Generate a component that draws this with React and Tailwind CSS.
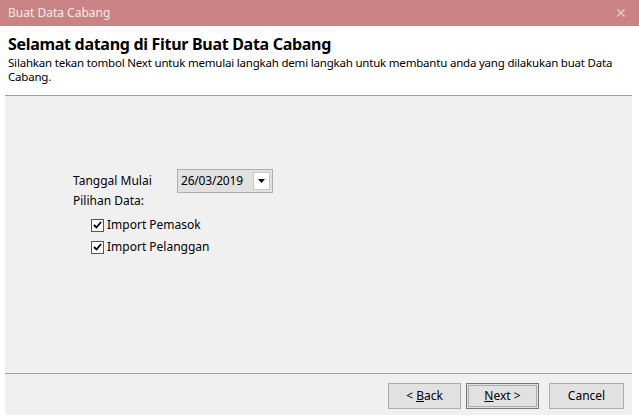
export default function App() {
  const font = { fontFamily: '"Noto Sans", "Open Sans", sans-serif' };
  return (
    <div className="w-[639px] h-[420px] bg-white overflow-hidden flex flex-col text-[12px] text-black" style={font}>
      <div className="h-[26px] bg-[#c98385] flex items-center justify-between pl-[8px] pr-[12px] shrink-0">
        <span className="text-[#f7eaea] text-[12px]">Buat Data Cabang</span>
        <span className="text-[#e9c9ca] text-[14px] leading-none">✕</span>
      </div>
      <div className="h-[69px] shrink-0 pl-[8px] pt-[8px]">
        <div className="text-[16px] font-bold leading-[20px] tracking-[-0.3px]">Selamat datang di Fitur Buat Data Cabang</div>
        <div className="text-[11.5px] leading-[14px] mt-[2px] tracking-[-0.2px]">
          <div className="whitespace-nowrap">Silahkan tekan tombol Next untuk memulai langkah demi langkah untuk membantu anda yang dilakukan buat Data</div>
          <div>Cabang.</div>
        </div>
      </div>
      <div className="ml-[5px] mr-[7px] flex flex-col">
        <div className="h-px bg-[#a0a0a0]" />
        <div className="h-[277px] bg-[#f0f0f0] pl-[68px] pt-[73px] flex flex-col">
          <div className="flex items-center h-[24px]">
            <span className="w-[104px] text-[12px]">Tanggal Mulai</span>
            <div className="w-[96px] h-[24px] border border-[#adadad] bg-[#e1e1e1] flex items-center justify-between pl-[3px] pr-[2px]">
              <span className="text-[12px] tracking-[-0.2px]">26/03/2019</span>
              <div className="w-[17px] h-[18px] bg-white border border-[#c8c8c8] flex items-center justify-center">
                <svg width="7" height="4" viewBox="0 0 7 4"><path d="M0 0H7L3.5 4Z" fill="#000" /></svg>
              </div>
            </div>
          </div>
          <div className="h-[20px] flex items-center mt-[-2px]">Pilihan Data:</div>
          <div className="flex flex-col pl-[18px] mt-[3px]">
            {["Import Pemasok", "Import Pelanggan"].map((t) => (
              <div key={t} className="flex items-center h-[22px]">
                <div className="w-[13px] h-[13px] border border-[#555] bg-white flex items-center justify-center mr-[2px]">
                  <svg width="9" height="8" viewBox="0 0 9 8"><path d="M1 4L3.5 6.5L8 1" stroke="#000" strokeWidth="1.8" fill="none" /></svg>
                </div>
                <span className="ml-[1px]">{t}</span>
              </div>
            ))}
          </div>
        </div>
        <div className="h-px bg-[#a0a0a0]" />
        <div className="h-[41px] bg-[#f0f0f0] flex items-start justify-end pt-[9px] pr-[8px]">
          <button className="w-[73px] h-[26px] bg-[#e1e1e1] border border-[#adadad] text-[12px] flex items-center justify-center">
            &lt;&nbsp;<span className="underline">B</span>ack
          </button>
          <button className="w-[73px] h-[26px] ml-[5px] bg-[#e1e1e1] border border-[#777] outline outline-1 outline-[#adadad] outline-offset-[-3px] text-[12px] flex items-center justify-center">
            <span className="underline">N</span>ext&nbsp;&gt;
          </button>
          <button className="w-[75px] h-[26px] ml-[10px] bg-[#e1e1e1] border border-[#adadad] text-[12px] flex items-center justify-center">
            Cancel
          </button>
        </div>
      </div>
    </div>
  );
}
